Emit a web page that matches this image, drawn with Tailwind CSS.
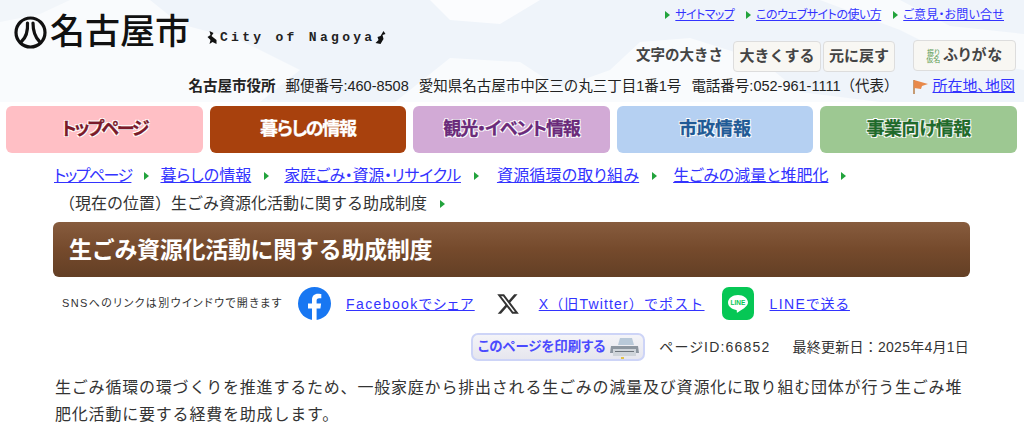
<!DOCTYPE html>
<html lang="ja">
<head>
<meta charset="utf-8">
<script src="https://cdn.jsdelivr.net/npm/@tailwindcss/browser@4"></script>
</head>
<body class="bg-white text-[#333] font-['Liberation_Sans','Noto_Sans_CJK_JP',sans-serif] [font-feature-settings:'palt'] w-[1024px] h-[427px] overflow-hidden">
<header class="relative h-[102px] overflow-hidden bg-[#f9fbfd]">
  <svg class="absolute inset-0 w-full h-full" viewBox="0 0 1024 102" preserveAspectRatio="none">
    <path d="M150 0H1024V102H880L800 92L760 60L690 38L640 42L610 70L560 88L520 62L450 58L395 102H260L300 70L240 40L180 24Z" fill="#eff4fa"/>
    <path d="M0 0H70L40 14L0 22Z" fill="#f2f6fa"/>
    <path d="M820 0H900L950 26L1024 34V70L960 60L900 30Z" fill="#f9fbfd"/>
    <path d="M430 0H540L500 24L450 20Z" fill="#fbfcfe"/>
  </svg>
  <div class="relative flex flex-col h-full">
    <div class="flex justify-between items-start h-[72px]">
      <div class="flex items-start pl-[14px] pt-[11px]">
        <svg class="w-[33px] h-[33px] mt-[5px]" viewBox="0 0 33 33" fill="none" stroke="#111" stroke-linecap="round">
          <circle cx="16.5" cy="16.5" r="14.5" stroke-width="3.2"/>
          <path d="M13.5 7C14 15 12.5 21 7.5 25.5" stroke-width="3.2"/>
          <path d="M19 7C19 15 21 21 25.5 25.5" stroke-width="3.2"/>
        </svg>
        <span class="ml-[3px] text-[35px] leading-[42px] font-medium text-[#111] [font-feature-settings:normal]">名古屋市</span>
        <div class="ml-[17px] mt-[19px] flex items-center">
          <svg class="w-[11px] h-[14px]" viewBox="0 0 10 14" fill="#111"><path d="M2 0L6 2L4 5L9 9L9 13L5 11L2 13L3 9L0 6L3 4Z"/></svg>
          <span class="ml-[2px] font-['Liberation_Mono',monospace] text-[13px] leading-[16px] font-bold text-[#222] tracking-[3.3px]">City of Nagoya</span>
          <svg class="w-[11px] h-[14px]" viewBox="0 0 10 14" fill="#111"><path d="M8 0L10 3L7 4L8 8L5 13L0 12L3 9L2 6L5 5Z"/></svg>
        </div>
      </div>
      <div class="flex flex-col items-end pr-[8px]">
        <ul class="flex gap-[12px] pt-[7px] pr-[12px] text-[12px] leading-[16px]">
          <li class="flex items-center gap-[5px]"><span class="w-0 h-0 border-y-[4px] border-y-transparent border-l-[5px] border-l-[#22a33c]"></span><a href="#" class="text-[#3333ff] underline tracking-[-0.6px]">サイトマップ</a></li>
          <li class="flex items-center gap-[5px]"><span class="w-0 h-0 border-y-[4px] border-y-transparent border-l-[5px] border-l-[#22a33c]"></span><a href="#" class="text-[#3333ff] underline tracking-[-0.5px]">このウェブサイトの使い方</a></li>
          <li class="flex items-center gap-[5px]"><span class="w-0 h-0 border-y-[4px] border-y-transparent border-l-[5px] border-l-[#22a33c]"></span><a href="#" class="text-[#3333ff] underline tracking-[0.2px]">ご意見・お問い合せ</a></li>
        </ul>
        <div class="flex items-start mt-[17px]">
          <span class="text-[14.5px] leading-[30px] font-bold text-[#444] mr-[10px] [font-feature-settings:normal]">文字の大きさ</span>
          <button class="w-[88px] h-[31px] mt-[1px] bg-[#f8f7f3] border border-[#ddd] rounded-[4px] text-[15px] font-bold text-[#444] [font-feature-settings:normal]">大きくする</button>
          <button class="w-[72px] h-[31px] mt-[1px] ml-[2px] bg-[#f8f7f3] border border-[#ddd] rounded-[4px] text-[15px] font-bold text-[#444] [font-feature-settings:normal]">元に戻す</button>
          <button class="w-[103px] h-[31px] ml-[18px] bg-[#f8f7f3] border border-[#ddd] rounded-[4px] text-[15px] font-bold text-[#444] tracking-[0.8px] flex items-center justify-center gap-[3px]">
            <span class="flex flex-col text-[7px] leading-[7px] tracking-normal text-[#5a9a50] font-normal w-[14px]">
              <span>振り</span><span>仮名</span>
            </span>
            ふりがな
          </button>
        </div>
      </div>
    </div>
    <div class="flex justify-end items-center h-[24px] mt-[2px] pr-[9px] text-[14.5px] leading-[20px] text-[#222] [font-feature-settings:normal]">
      <strong class="font-bold mr-[10px]">名古屋市役所</strong>
      <span class="mr-[10px]">郵便番号:460-8508</span>
      <span class="mr-[10px]">愛知県名古屋市中区三の丸三丁目1番1号</span>
      <span class="mr-[14px]">電話番号:052-961-1111（代表）</span>
      <svg class="w-[17px] h-[15px] mr-[3px]" viewBox="0 0 17 15"><path d="M2 1L2 15" stroke="#b5763a" stroke-width="1.4"/><path d="M2 1L9 3L16 5L10 7L9 10L2 9Z" fill="#e8894a"/></svg>
      <a href="#" class="text-[#3333ff] underline text-[15px] [font-feature-settings:'palt']">所在地、地図</a>
    </div>
  </div>
</header>
<nav class="grid grid-cols-5 gap-[7px] pl-[6px] pr-[7px] mt-[4px] h-[47px] text-[18px] font-bold [-webkit-text-stroke:0.3px]">
  <a href="#" class="flex items-center justify-center rounded-[6px] bg-[#ffbfc5] text-[#7a1a2a] tracking-[-2.3px] [text-shadow:-1px_-1px_0_#fff,1px_-1px_0_#fff,-1px_1px_0_#fff,1px_1px_0_#fff]">トップページ</a>
  <a href="#" class="flex items-center justify-center rounded-[6px] bg-[#a8410d] text-white tracking-[-1.3px]">暮らしの情報</a>
  <a href="#" class="flex items-center justify-center rounded-[6px] bg-[#d2aad6] text-[#6a2a7a] tracking-[-1.1px] [text-shadow:-1px_-1px_0_#fff,1px_-1px_0_#fff,-1px_1px_0_#fff,1px_1px_0_#fff]">観光・イベント情報</a>
  <a href="#" class="flex items-center justify-center rounded-[6px] bg-[#b5d0f2] text-[#1f5a96] [text-shadow:-1px_-1px_0_#fff,1px_-1px_0_#fff,-1px_1px_0_#fff,1px_1px_0_#fff]">市政情報</a>
  <a href="#" class="flex items-center justify-center rounded-[6px] bg-[#9dc892] text-[#1f6a2a] tracking-[-0.5px] [text-shadow:-1px_-1px_0_#fff,1px_-1px_0_#fff,-1px_1px_0_#fff,1px_1px_0_#fff]">事業向け情報</a>
</nav>
<main class="px-[54px]">
  <ol class="mt-[9px] text-[16px] leading-[28px]">
    <li class="flex items-center h-[28px]">
      <a href="#" class="text-[#3333ff] underline tracking-[-1.6px]">トップページ</a><span class="ml-[13px] mr-[11px] w-0 h-0 border-y-[4px] border-y-transparent border-l-[5px] border-l-[#22a33c]"></span>
      <a href="#" class="text-[#3333ff] underline">暮らしの情報</a><span class="ml-[13px] mr-[15px] w-0 h-0 border-y-[4px] border-y-transparent border-l-[5px] border-l-[#22a33c]"></span>
      <a href="#" class="text-[#3333ff] underline tracking-[-0.3px]">家庭ごみ・資源・リサイクル</a><span class="ml-[13px] mr-[18px] w-0 h-0 border-y-[4px] border-y-transparent border-l-[5px] border-l-[#22a33c]"></span>
      <a href="#" class="text-[#3333ff] underline tracking-[0.2px]">資源循環の取り組み</a><span class="ml-[13px] mr-[16px] w-0 h-0 border-y-[4px] border-y-transparent border-l-[5px] border-l-[#22a33c]"></span>
      <a href="#" class="text-[#3333ff] underline">生ごみの減量と堆肥化</a><span class="ml-[13px] w-0 h-0 border-y-[4px] border-y-transparent border-l-[5px] border-l-[#22a33c]"></span>
    </li>
    <li class="flex items-center h-[28px] pl-[5px] [font-feature-settings:normal]">
      <span>（現在の位置）生ごみ資源化活動に関する助成制度</span><span class="mx-[13px] w-0 h-0 border-y-[4px] border-y-transparent border-l-[5px] border-l-[#22a33c]"></span>
    </li>
  </ol>
  <h1 class="mt-[4px] w-[917px] -ml-[1px] h-[55px] rounded-[6px] bg-gradient-to-b from-[#875c3e] via-[#754a2c] to-[#633f25] text-white font-bold text-[23px] tracking-[-0.3px] leading-[57px] pl-[16px] [font-feature-settings:normal]">生ごみ資源化活動に関する助成制度</h1>
  <div class="flex items-center h-[33px] mt-[10px] text-[14px] tracking-[1.4px]">
    <span class="ml-[8px] w-[236px] text-[11px] tracking-[1.35px] text-[#333] whitespace-nowrap">SNSへのリンクは別ウインドウで開きます</span>
    <svg class="w-[33px] h-[33px]" viewBox="0 0 33 33"><circle cx="16.5" cy="16.5" r="16.5" fill="#1877f2"/><path d="M14 33V21.5H10V16.5H14V13C14 9 16.3 6.8 20 6.8C21.7 6.8 23.3 7.1 23.3 7.1V11.2H21.2C19.2 11.2 18.6 12.4 18.6 13.7V16.5H23.1L22.4 21.5H18.6V33Z" fill="#fff"/></svg>
    <a href="#" class="ml-[15px] pt-[1px] text-[#3333ff] underline">Facebookでシェア</a>
    <svg class="ml-[21px] w-[24px] h-[24px]" viewBox="0 0 24 24" fill="#333"><path d="M18.244 2.25h3.308l-7.227 8.26 8.502 11.24H16.17l-5.214-6.817L4.99 21.75H1.68l7.73-8.835L1.254 2.25H8.08l4.713 6.231zm-1.161 17.52h1.833L7.084 4.126H5.117z"/></svg>
    <a href="#" class="ml-[19px] pt-[1px] text-[#3333ff] underline [font-feature-settings:normal] tracking-[1.15px]">X（旧Twitter）でポスト</a>
    <svg class="ml-[17px] w-[32px] h-[33px]" viewBox="0 0 32 33"><rect width="32" height="33" rx="7" fill="#06c755"/><path d="M16 8C10.5 8 6 11.4 6 15.6C6 19.3 9.5 22.4 14.2 23C15 23.2 15 24 14.8 25C14.7 25.7 15.3 25.8 16.3 25C19 23.3 26 19.8 26 15.6C26 11.4 21.5 8 16 8Z" fill="#fff"/><text x="16" y="18" text-anchor="middle" font-size="6.5" font-weight="700" fill="#06c755" font-family="Liberation Sans" letter-spacing="0">LINE</text></svg>
    <a href="#" class="ml-[16px] pt-[1px] text-[#3333ff] underline">LINEで送る</a>
  </div>
  <div class="flex items-center justify-end h-[28px] mt-[13px] mr-[1px] text-[14px]">
    <a href="#" class="relative flex items-center w-[174px] h-[28px] rounded-[7px] border-2 border-[#cdd4f7] bg-gradient-to-b from-[#f4f4f8] to-[#e6e6ee] pl-[5px] text-[13.4px] font-bold text-[#4a4aff]">
      このページを印刷する
      <svg class="absolute right-[3px] top-[1px] w-[30px] h-[24px]" viewBox="0 0 30 24"><path d="M10 2H22L24 9H8Z" fill="#b9c9d9"/><path d="M1 10H28L29 17H0Z" fill="#8d96a0"/><path d="M3 13H26V20H3Z" fill="#cfd4da"/><path d="M5 15H24V16H5Z" fill="#6d747c"/><path d="M11 21H14V23H11Z" fill="#e2c24a"/></svg>
    </a>
    <span class="ml-[14px] tracking-[1.2px]">ページID:66852</span>
    <span class="ml-[22px] tracking-[0.25px] [font-feature-settings:normal]">最終更新日：2025年4月1日</span>
  </div>
  <p class="mt-[13px] ml-[1px] text-[16px] leading-[27px] tracking-[0.8px] [font-feature-settings:normal]">生ごみ循環の環づくりを推進するため、一般家庭から排出される生ごみの減量及び資源化に取り組む団体が行う生ごみ堆<br>肥化活動に要する経費を助成します。</p>
</main>
</body>
</html>
